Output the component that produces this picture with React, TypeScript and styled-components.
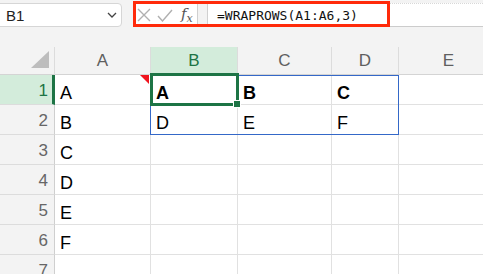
import React from "react";
import styled, { createGlobalStyle } from "styled-components";

const GlobalStyle = createGlobalStyle`
  html, body {
    margin: 0;
    padding: 0;
    background: #f3f3f3;
    overflow: hidden;
  }
  body {
    font-family: "Liberation Sans", Arial, sans-serif;
  }
`;

const columns = [
  { name: "A", width: 96 },
  { name: "B", width: 87 },
  { name: "C", width: 94 },
  { name: "D", width: 67 },
  { name: "E", width: 100 },
];

// rows of the sheet, by column letter
const data: { [row: number]: { [col: string]: { text: string; bold?: boolean } } } = {
  1: { A: { text: "A" }, B: { text: "A", bold: true }, C: { text: "B", bold: true }, D: { text: "C", bold: true } },
  2: { A: { text: "B" }, B: { text: "D" }, C: { text: "E" }, D: { text: "F" } },
  3: { A: { text: "C" } },
  4: { A: { text: "D" } },
  5: { A: { text: "E" } },
  6: { A: { text: "F" } },
  7: {},
};

const selectedCol = "B";
const selectedRow = 1;

function App() {
  return (
    <>
      <GlobalStyle />
      <Window>
        <Toolbar>
          <NameBox>
            <span>B1</span>
            <svg width="10" height="6" viewBox="0 0 10 6">
              <path d="M1 1 L5 5 L9 1" fill="none" stroke="#444" strokeWidth="1.3" />
            </svg>
          </NameBox>
          <Actions>
            <svg width="14" height="14" viewBox="0 0 14 14">
              <path d="M1 1 L13 13 M13 1 L1 13" stroke="#b0b0b0" strokeWidth="1.4" />
            </svg>
            <svg width="16" height="13" viewBox="0 0 16 13">
              <path d="M1 7 L5.5 12 L15 1" fill="none" stroke="#b0b0b0" strokeWidth="1.4" />
            </svg>
            <Fx>
              <i>f</i>
              <sub>x</sub>
            </Fx>
          </Actions>
          <FormulaInput>=WRAPROWS(A1:A6,3)</FormulaInput>
          <Highlight />
        </Toolbar>

        <Sheet>
          <Corner>
            <svg width="18" height="17" viewBox="0 0 18 17">
              <path d="M18 0 L18 17 L0 17 Z" fill="#bdbdbd" />
            </svg>
          </Corner>
          {columns.map((col, c) => (
            <ColHeader key={col.name} $col={c + 2} $active={col.name === selectedCol}>
              {col.name}
            </ColHeader>
          ))}

          {Object.keys(data).map((key) => {
            const row = Number(key);
            return (
              <React.Fragment key={row}>
                <RowHeader $row={row + 1} $active={row === selectedRow}>
                  {row}
                </RowHeader>
                {columns.map((col, c) => {
                  const cell = data[row][col.name];
                  return (
                    <Cell key={col.name} $row={row + 1} $col={c + 2} $bold={cell?.bold}>
                      {cell?.text}
                      {row === 1 && col.name === "A" ? <NoteMark /> : null}
                      {row === selectedRow && col.name === selectedCol ? (
                        <ActiveCell>
                          <FillHandle />
                        </ActiveCell>
                      ) : null}
                    </Cell>
                  );
                })}
              </React.Fragment>
            );
          })}

          <SpillRange />
        </Sheet>
      </Window>
    </>
  );
}

export default App;

const Window = styled.div`
  width: 483px;
  height: 274px;
  overflow: hidden;
  background: #f3f3f3;
`;

const Toolbar = styled.div`
  position: relative;
  display: flex;
  align-items: stretch;
  height: 24px;
  padding: 3px 0 20px 0;
`;

const NameBox = styled.div`
  display: flex;
  align-items: center;
  justify-content: space-between;
  box-sizing: border-box;
  width: 128px;
  margin-left: -6px;
  padding: 0 4px 0 11px;
  background: #ffffff;
  border: 1px solid #d6d6d6;
  border-radius: 4px;
  font-size: 15px;
  color: #222;
`;

const Actions = styled.div`
  display: flex;
  align-items: center;
  gap: 6px;
  box-sizing: border-box;
  width: 64px;
  margin-left: 12px;
  padding: 0 3px 0 3px;
  background: #ffffff;
  border-right: 1px solid #d0d0d0;
`;

const Fx = styled.span`
  font-family: "DejaVu Serif", "Liberation Serif", serif;
  font-size: 15px;
  color: #555;
  line-height: 1;
  margin-left: 2px;

  i {
    font-style: italic;
  }

  sub {
    font-size: 11px;
    font-style: italic;
    vertical-align: -3px;
  }
`;

const FormulaInput = styled.div`
  flex: 1;
  display: flex;
  align-items: center;
  margin-left: 9px;
  padding-left: 9px;
  background: #ffffff;
  border-top: 1px dotted #d8d8d8;
  border-left: 1px solid #d0d0d0;
  border-bottom: 1px solid #cccccc;
  font-family: "DejaVu Sans Mono", "Liberation Mono", monospace;
  font-size: 13px;
  color: #111;
`;

const Highlight = styled.div`
  position: absolute;
  left: 133px;
  top: 1px;
  width: 257px;
  height: 26px;
  box-sizing: border-box;
  border: 3px solid #ff2a0a;
  pointer-events: none;
`;

const Sheet = styled.div`
  display: grid;
  grid-template-columns: 55px ${columns.map((c) => `${c.width}px`).join(" ")};
  grid-template-rows: 28px repeat(7, 30px);
`;

const Corner = styled.div`
  grid-row: 1;
  grid-column: 1;
  display: flex;
  align-items: flex-end;
  justify-content: flex-end;
  box-sizing: border-box;
  padding: 0 5px 6px 0;
  border-right: 1px solid #dcdcdc;
  border-bottom: 1px solid #d4d4d4;
`;

const ColHeader = styled.div<{ $col: number; $active?: boolean }>`
  grid-row: 1;
  grid-column: ${(p) => p.$col};
  display: flex;
  align-items: center;
  justify-content: center;
  box-sizing: border-box;
  padding-top: 1px;
  background: ${(p) => (p.$active ? "#d3ecdb" : "#f3f3f3")};
  color: ${(p) => (p.$active ? "#1d7445" : "#5f5f5f")};
  border-right: 1px solid #dcdcdc;
  border-bottom: 1px solid #d4d4d4;
  font-size: 17px;
`;

const RowHeader = styled.div<{ $row: number; $active?: boolean }>`
  grid-row: ${(p) => p.$row};
  grid-column: 1;
  display: flex;
  align-items: flex-end;
  justify-content: flex-end;
  box-sizing: border-box;
  padding: 0 ${(p) => (p.$active ? "4px" : "6px")} 3px 0;
  background: ${(p) => (p.$active ? "#d3ecdb" : "#f3f3f3")};
  color: ${(p) => (p.$active ? "#1d7445" : "#666")};
  border-right: ${(p) => (p.$active ? "3px solid #1d7445" : "1px solid #cfcfcf")};
  border-bottom: 1px solid #dcdcdc;
  font-size: 17px;
`;

const Cell = styled.div<{ $row: number; $col: number; $bold?: boolean }>`
  grid-row: ${(p) => p.$row};
  grid-column: ${(p) => p.$col};
  position: relative;
  display: flex;
  align-items: flex-end;
  box-sizing: border-box;
  padding: 0 0 1px 5px;
  background: #ffffff;
  border-right: 1px solid #e1e1e1;
  border-bottom: 1px solid #e1e1e1;
  font-size: 18px;
  line-height: 20px;
  font-weight: ${(p) => (p.$bold ? 700 : 400)};
  color: #000;
`;

const NoteMark = styled.div`
  position: absolute;
  top: 0;
  right: 1px;
  width: 0;
  height: 0;
  border-top: 9px solid #f0141e;
  border-left: 9px solid transparent;
`;

const ActiveCell = styled.div`
  position: absolute;
  top: -2px;
  left: -1px;
  right: -2px;
  bottom: -2px;
  border: 3px solid #1d7445;
  pointer-events: none;
  z-index: 2;
`;

const FillHandle = styled.div`
  position: absolute;
  right: -5px;
  bottom: -5px;
  width: 6px;
  height: 6px;
  background: #1d7445;
  border: 1px solid #ffffff;
`;

const SpillRange = styled.div`
  grid-column: 3 / 6;
  grid-row: 2 / 4;
  margin: 0 0 0 -1px;
  border: 1.5px solid #3468c8;
  pointer-events: none;
  z-index: 1;
`;
